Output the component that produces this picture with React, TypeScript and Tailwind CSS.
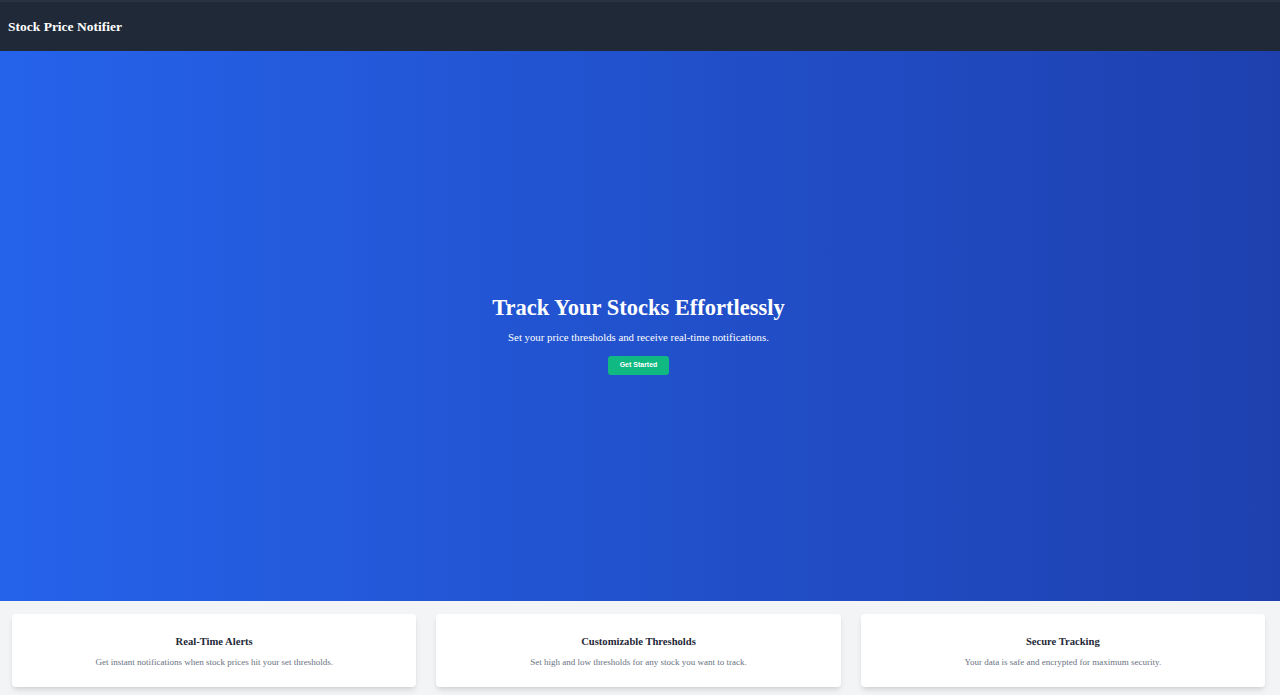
const FEATURES = [
  {
    title: "Real-Time Alerts",
    text: "Get instant notifications when stock prices hit your set thresholds.",
  },
  {
    title: "Customizable Thresholds",
    text: "Set high and low thresholds for any stock you want to track.",
  },
  {
    title: "Secure Tracking",
    text: "Your data is safe and encrypted for maximum security.",
  },
];

export default function App() {
  return (
    <div className="flex h-[695px] flex-col overflow-hidden bg-gray-100 font-['Liberation_Serif',serif]">
      <header className="flex h-[51px] shrink-0 items-center border-t-2 border-[#2a3140] bg-[#1f2937] px-2 pt-[2px]">
        <span className="text-[13.5px] font-bold text-white">Stock Price Notifier</span>
      </header>

      <section className="flex h-[550px] shrink-0 flex-col items-center justify-center bg-gradient-to-r from-[#2563eb] to-[#1e40af] pr-[3px] pt-[20px] text-white">
        <h1 className="text-[22.5px] font-bold leading-none">Track Your Stocks Effortlessly</h1>
        <p className="mt-[11px] text-[10.8px] leading-tight">
          Set your price thresholds and receive real-time notifications.
        </p>
        <button
          type="button"
          className="mt-[12px] h-[19px] w-[61px] rounded-[3px] bg-[#10b981] font-['Liberation_Sans',sans-serif] text-[7px] font-bold text-white"
        >
          Get Started
        </button>
      </section>

      <section className="grid grid-cols-3 gap-5 pl-3 pr-[15px] pt-[13px]">
        {FEATURES.map((f) => (
          <div
            key={f.title}
            className="flex h-[73px] flex-col items-center justify-center rounded-[4px] bg-white pt-[3px] shadow-md"
          >
            <h3 className="text-[10.6px] font-bold leading-none text-[#1f2937]">{f.title}</h3>
            <p className="mt-[11px] text-[9px] leading-none text-gray-500">{f.text}</p>
          </div>
        ))}
      </section>
    </div>
  );
}
